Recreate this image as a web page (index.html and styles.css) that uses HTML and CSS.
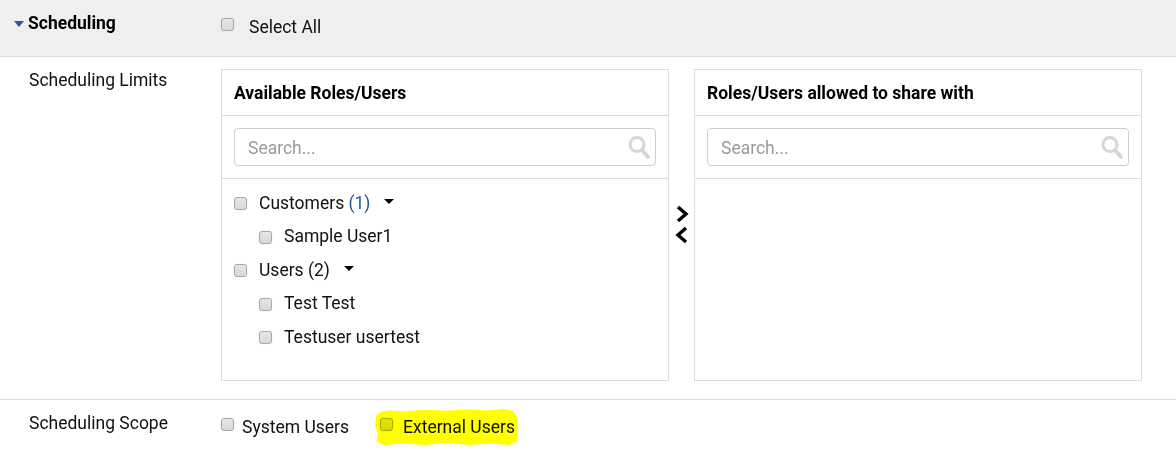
FILE: index.html
```html
<!DOCTYPE html>
<html>
<head>
<meta charset="utf-8">
<link rel="stylesheet" href="styles.css">
</head>
<body>
<div class="section-head">
  <div class="head-label"><span class="caret-blue"></span><span class="head-title">Scheduling</span></div>
  <label class="select-all"><input type="checkbox" class="cb cb-head"><span class="select-all-text">Select All</span></label>
</div>

<div class="limits-row">
  <div class="row-label">Scheduling Limits</div>
  <div class="dual-list">
    <div class="panel">
      <div class="panel-head">Available Roles/Users</div>
      <div class="panel-search">
        <div class="search-box">
          <input class="search-input" type="text" placeholder="Search...">
          <svg class="search-icon" width="24" height="26" viewBox="0 0 24 26"><circle cx="10" cy="9.5" r="7" fill="none" stroke="#d6d6d6" stroke-width="3"/><line x1="15" y1="15" x2="21" y2="22" stroke="#d6d6d6" stroke-width="4" stroke-linecap="round"/></svg>
        </div>
      </div>
      <div class="panel-list">
        <div class="item"><input type="checkbox" class="cb"><span class="item-text">Customers <span class="count">(1)</span></span><span class="caret"></span></div>
        <div class="item child"><input type="checkbox" class="cb"><span class="item-text">Sample User1</span></div>
        <div class="item"><input type="checkbox" class="cb"><span class="item-text">Users (2)</span><span class="caret"></span></div>
        <div class="item child"><input type="checkbox" class="cb"><span class="item-text">Test Test</span></div>
        <div class="item child"><input type="checkbox" class="cb"><span class="item-text">Testuser usertest</span></div>
      </div>
    </div>
    <div class="mover">
      <svg width="14" height="40" viewBox="0 0 14 40"><polyline points="3,2 11,9 3,16" fill="none" stroke="#000" stroke-width="3.4"/><polyline points="11,23 3,30 11,37" fill="none" stroke="#000" stroke-width="3.4"/></svg>
    </div>
    <div class="panel">
      <div class="panel-head">Roles/Users allowed to share with</div>
      <div class="panel-search">
        <div class="search-box">
          <input class="search-input" type="text" placeholder="Search...">
          <svg class="search-icon" width="24" height="26" viewBox="0 0 24 26"><circle cx="10" cy="9.5" r="7" fill="none" stroke="#d6d6d6" stroke-width="3"/><line x1="15" y1="15" x2="21" y2="22" stroke="#d6d6d6" stroke-width="4" stroke-linecap="round"/></svg>
        </div>
      </div>
      <div class="panel-list"></div>
    </div>
  </div>
</div>

<div class="scope-row">
  <div class="row-label">Scheduling Scope</div>
  <div class="scope-options">
    <label class="opt"><input type="checkbox" class="cb"><span class="opt-text">System Users</span></label>
    <label class="opt opt-highlight"><input type="checkbox" class="cb"><span class="opt-text ext">External Users</span></label>
  </div>
</div>
</body>
</html>
```
FILE: styles.css
```css
* { box-sizing: border-box; }
body {
  margin: 0;
  font-family: Roboto, "Liberation Sans", Arial, sans-serif;
  font-size: 17.5px;
  color: #111;
  background: #fff;
}
.cb {
  -webkit-appearance: none;
  appearance: none;
  width: 13px;
  height: 13px;
  margin: 0;
  flex: none;
  border: 1px solid #a8a8a8;
  border-radius: 3px;
  background: linear-gradient(#e6e6e6, #d8d8d8);
  box-shadow: 0 0 1px rgba(0,0,0,0.2);
}
.section-head {
  height: 57px;
  background: #efefef;
  border-bottom: 1px solid #dcdcdc;
  display: flex;
  align-items: flex-start;
}
.head-label {
  width: 221px;
  padding: 13px 0 0 14px;
  display: flex;
  align-items: center;
  line-height: 20px;
}
.caret-blue {
  width: 0; height: 0;
  border-left: 5px solid transparent;
  border-right: 5px solid transparent;
  border-top: 6px solid #2a5a9c;
  margin: 2px 4px 0 0;
}
.head-title { font-weight: 700; font-size: 17.5px; color: #000; }
.select-all { display: flex; align-items: flex-start; }
.cb-head { margin-top: 18px; }
.select-all-text { margin-left: 15px; padding-top: 17px; line-height: 20px; }

.limits-row {
  display: flex;
  border-bottom: 1px solid #dcdcdc;
}
.row-label {
  width: 221px;
  flex: none;
  padding: 13px 0 0 29px;
  line-height: 20px;
}
.dual-list {
  display: flex;
  padding: 12px 0 18px 0;
}
.panel {
  width: 448px;
  height: 312px;
  border: 1px solid #dcdcdc;
  display: flex;
  flex-direction: column;
}
.panel-head {
  height: 46px;
  padding: 13px 12px 0;
  line-height: 20px;
  font-weight: 700;
  font-size: 17.5px;
  color: #000;
  border-bottom: 1px solid #dcdcdc;
}
.panel-search {
  padding: 12px;
  border-bottom: 1px solid #dcdcdc;
}
.search-box {
  height: 38px;
  border: 1px solid #cfcfcf;
  border-radius: 4px;
  display: flex;
  align-items: center;
  padding: 0 4px 0 13px;
}
.search-input {
  flex: 1;
  min-width: 0;
  border: 0;
  outline: 0;
  padding: 2px 0 0;
  font: inherit;
  font-size: 17.5px;
  background: transparent;
}
.search-input::placeholder { color: #9a9a9a; }
.search-icon { flex: none; margin-top: 1px; }
.panel-list {
  flex: 1;
  padding: 7px 12px 0;
}
.item {
  height: 33.5px;
  display: flex;
  align-items: center;
  line-height: 20px;
}
.item .cb { margin-top: 2px; }
.item.child { padding-left: 25px; }
.item-text { margin-left: 12px; }
.count { color: #1f5a96; }
.caret {
  width: 0; height: 0;
  border-left: 5px solid transparent;
  border-right: 5px solid transparent;
  border-top: 5px solid #000;
  margin: 0 0 2px 14px;
}
.mover {
  width: 25px;
  display: flex;
  align-items: center;
  justify-content: center;
  padding-left: 1px;
}
.scope-row {
  display: flex;
  height: 50px;
}
.scope-options {
  display: flex;
  align-items: flex-start;
}
.opt {
  display: flex;
  align-items: flex-start;
  position: relative;
}
.opt .cb { margin-top: 18px; }
.opt-text { margin-left: 8px; padding-top: 17px; line-height: 20px; }
.opt-text.ext { margin-left: 10px; }
.opt-highlight { margin-left: 31px; }
.opt-highlight::after {
  content: "";
  position: absolute;
  left: -5px;
  right: -3px;
  top: 9px;
  height: 36px;
  background: #ffff00;
  mix-blend-mode: multiply;
  clip-path: polygon(1% 18%, 4% 8%, 10% 4%, 22% 6%, 35% 2%, 50% 5%, 64% 1%, 78% 4%, 90% 0%, 97% 6%, 100% 30%, 99% 60%, 100% 88%, 94% 100%, 80% 96%, 66% 100%, 50% 95%, 35% 100%, 20% 96%, 6% 100%, 1% 90%, 2% 70%, 0% 45%);
}
```
